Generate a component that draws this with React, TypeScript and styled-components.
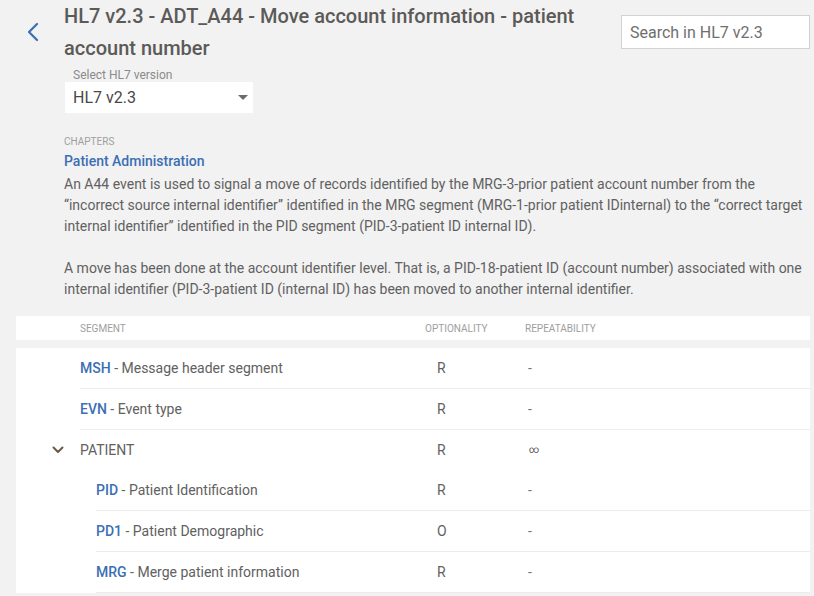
import React from "react";
import styled, { createGlobalStyle } from "styled-components";

type Segment = {
  code?: string;
  name: string;
  optionality: string;
  repeatability: string;
  depth: number;
  group?: boolean;
};

const segments: Segment[] = [
  { code: "MSH", name: "Message header segment", optionality: "R", repeatability: "-", depth: 0 },
  { code: "EVN", name: "Event type", optionality: "R", repeatability: "-", depth: 0 },
  { name: "PATIENT", optionality: "R", repeatability: "∞", depth: 0, group: true },
  { code: "PID", name: "Patient Identification", optionality: "R", repeatability: "-", depth: 1 },
  { code: "PD1", name: "Patient Demographic", optionality: "O", repeatability: "-", depth: 1 },
  { code: "MRG", name: "Merge patient information", optionality: "R", repeatability: "-", depth: 1 },
];

const BackIcon = () => (
  <svg width="14" height="20" viewBox="0 0 14 20">
    <polyline points="11,2 3,10 11,18" fill="none" stroke="#3a6fb5" strokeWidth="2.2" strokeLinecap="round" strokeLinejoin="round" />
  </svg>
);

const ChevronDown = () => (
  <svg width="12" height="8" viewBox="0 0 12 8">
    <polyline points="1.5,1.5 6,6 10.5,1.5" fill="none" stroke="#6a5a4a" strokeWidth="2" strokeLinecap="round" strokeLinejoin="round" />
  </svg>
);

const App: React.FC = () => {
  return (
    <>
      <GlobalStyle />
      <Page>
        <Header>
          <BackButton aria-label="back">
            <BackIcon />
          </BackButton>
          <TitleBlock>
            <Title>HL7 v2.3 - ADT_A44 - Move account information - patient account number</Title>
            <VersionLabel>Select HL7 version</VersionLabel>
            <SelectBox>
              <span>HL7 v2.3</span>
              <Caret />
            </SelectBox>
          </TitleBlock>
          <SearchInput placeholder="Search in HL7 v2.3" />
        </Header>

        <Intro>
          <Overline>Chapters</Overline>
          <ChapterLink>Patient Administration</ChapterLink>
          <Paragraph>
            An A44 event is used to signal a move of records identified by the MRG-3-prior patient account number from the
            “incorrect source internal identifier” identified in the MRG segment (MRG-1-prior patient IDinternal) to the “correct
            target internal identifier” identified in the PID segment (PID-3-patient ID internal ID).
          </Paragraph>
          <Paragraph $spaced>
            A move has been done at the account identifier level. That is, a PID-18-patient ID (account number) associated with
            one internal identifier (PID-3-patient ID (internal ID) has been moved to another internal identifier.
          </Paragraph>
        </Intro>

        <TableHead>
          <HeadCell $width={345}>Segment</HeadCell>
          <HeadCell $width={100}>Optionality</HeadCell>
          <HeadCell>Repeatability</HeadCell>
        </TableHead>

        <TableBody>
          {segments.map((s, i) => (
            <Row key={i} $depth={s.depth} $divider={!s.group}>
              <SegmentCell $depth={s.depth}>
                {s.group ? (
                  <>
                    <Expander>
                      <ChevronDown />
                    </Expander>
                    <GroupName>{s.name}</GroupName>
                  </>
                ) : (
                  <>
                    <Code>{s.code}</Code>
                    <Name>&nbsp;- {s.name}</Name>
                  </>
                )}
              </SegmentCell>
              <OptCell>{s.optionality}</OptCell>
              <RepCell $small={s.repeatability === "∞"}>{s.repeatability}</RepCell>
            </Row>
          ))}
        </TableBody>
      </Page>
    </>
  );
};

export default App;

const GlobalStyle = createGlobalStyle`
  body {
    margin: 0;
    background: #f2f2f2;
    font-family: Roboto, "Liberation Sans", sans-serif;
    color: #616161;
  }
  * { box-sizing: border-box; }
`;

const Page = styled.div`
  padding: 0 4px 4px 16px;
`;

const Header = styled.div`
  display: flex;
  align-items: flex-start;
`;

const BackButton = styled.button`
  width: 48px;
  height: 64px;
  display: flex;
  align-items: center;
  padding: 0 0 0 10px;
  border: none;
  background: transparent;
  cursor: pointer;
`;

const TitleBlock = styled.div`
  flex: 1;
  min-width: 0;
  padding-right: 40px;
`;

const Title = styled.h1`
  margin: 0;
  font-size: 20px;
  line-height: 32px;
  font-weight: 500;
  color: #5c5a58;
`;

const VersionLabel = styled.div`
  margin: 4px 0 0 9px;
  font-size: 12px;
  line-height: 14px;
  color: #8a8a8a;
`;

const SelectBox = styled.div`
  margin-left: 1px;
  width: 188px;
  height: 31px;
  background: #fff;
  display: flex;
  align-items: center;
  justify-content: space-between;
  padding: 0 5px 0 8px;
  font-size: 16px;
  color: #474747;
`;

const Caret = styled.span`
  width: 0;
  height: 0;
  border-left: 5px solid transparent;
  border-right: 5px solid transparent;
  border-top: 5px solid #6b6b6b;
`;

const SearchInput = styled.input`
  margin-top: 15px;
  width: 189px;
  height: 34px;
  border: 1px solid #d2d2d2;
  background: #fff;
  padding: 0 8px;
  font-family: Roboto, "Liberation Sans", sans-serif;
  font-size: 16px;
  color: #555;
  outline: none;
  &::placeholder {
    color: #6f6f6f;
  }
`;

const Intro = styled.div`
  margin: 23px 0 0 48px;
`;

const Overline = styled.div`
  font-size: 10px;
  line-height: 12px;
  text-transform: uppercase;
  color: #9e9e9e;
`;

const ChapterLink = styled.a`
  display: block;
  margin-top: 3px;
  font-size: 14px;
  line-height: 20px;
  font-weight: 500;
  color: #3a6fb5;
  cursor: pointer;
`;

const Paragraph = styled.p<{ $spaced?: boolean }>`
  margin: ${p => (p.$spaced ? "21px" : "3px")} 0 0;
  font-size: 14px;
  line-height: 21px;
  color: #616161;
`;

const TableHead = styled.div`
  margin-top: 16px;
  height: 24px;
  background: #fff;
  display: flex;
  align-items: center;
  padding-left: 64px;
`;

const HeadCell = styled.div<{ $width?: number }>`
  width: ${p => (p.$width ? `${p.$width}px` : "auto")};
  font-size: 10px;
  text-transform: uppercase;
  color: #9e9e9e;
`;

const TableBody = styled.div`
  margin-top: 8px;
  background: #fff;
`;

const Row = styled.div<{ $depth: number; $divider: boolean }>`
  display: flex;
  align-items: center;
  height: ${p => (p.$divider ? 41 : 40)}px;
  margin-left: ${p => 64 + p.$depth * 16}px;
  border-bottom: ${p => (p.$divider ? "1px solid #ececec" : "none")};
  font-size: 14px;
`;

const SegmentCell = styled.div<{ $depth: number }>`
  width: ${p => 345 - p.$depth * 16}px;
  display: flex;
  align-items: center;
`;

const Expander = styled.span`
  display: flex;
  margin-left: -28px;
  width: 28px;
`;

const Code = styled.span`
  font-weight: 500;
  color: #3a6fb5;
`;

const Name = styled.span`
  color: #616161;
`;

const GroupName = styled.span`
  color: #616161;
`;

const OptCell = styled.div`
  width: 100px;
  padding-left: 12px;
  color: #616161;
`;

const RepCell = styled.div<{ $small?: boolean }>`
  padding-left: ${p => (p.$small ? "4px" : "3px")};
  font-size: ${p => (p.$small ? "10px" : "14px")};
  line-height: 14px;
  color: ${p => (p.$small ? "#555" : "#757575")};
`;
